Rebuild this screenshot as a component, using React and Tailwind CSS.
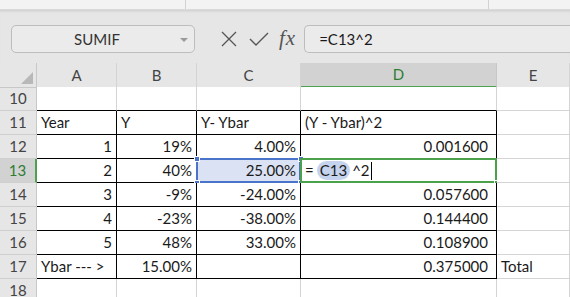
import React from "react";

const rows = [
  { n: 10, cells: ["", "", "", "", ""] },
  { n: 11, cells: [["Year", "l"], ["Y", "l"], ["Y- Ybar", "l"], ["(Y - Ybar)^2", "l"], ""] },
  { n: 12, cells: ["1", "19%", "4.00%", "0.001600", ""] },
  { n: 13, cells: ["2", "40%", "25.00%", "", ""] },
  { n: 14, cells: ["3", "-9%", "-24.00%", "0.057600", ""] },
  { n: 15, cells: ["4", "-23%", "-38.00%", "0.144400", ""] },
  { n: 16, cells: ["5", "48%", "33.00%", "0.108900", ""] },
  { n: 17, cells: [["Ybar --- >", "l"], "15.00%", "", "0.375000", ["Total", "l"]] },
  { n: 18, cells: ["", "", "", "", ""] },
];

const Handle = ({ pos }) => (
  <span className={`absolute w-[6px] h-[6px] bg-[#4a74c9] border border-white ${pos}`} />
);

const Cell = ({ value, row, col }) => {
  const text = Array.isArray(value) ? value[0] : value;
  const left = Array.isArray(value) && value[1] === "l";
  const inTable = row >= 11 && row <= 17 && col <= 3;
  const bottomBlack = row >= 10 && row <= 17 && col <= 3;
  const isC13 = row === 13 && col === 2;
  const isD13 = row === 13 && col === 3;

  return (
    <div
      className={`relative h-[24px] border-r border-b pl-[4px] leading-[23px] whitespace-nowrap ${
        col === 3 && !left ? "pr-[8px]" : "pr-[4px]"
      } ${inTable ? "border-r-black" : "border-r-[#d4d4d4]"} ${
        bottomBlack ? "border-b-black" : "border-b-[#d4d4d4]"
      } ${left ? "text-left" : "text-right"} ${isC13 ? "bg-[#dbe2f4]" : "bg-white"}`}
    >
      {text}
      {isC13 && (
        <>
          <span className="absolute -left-px -top-px right-[-1px] bottom-[-1px] border-2 border-[#4a74c9] pointer-events-none" />
          <Handle pos="-left-[3px] -top-[3px]" />
          <Handle pos="-right-[4px] -top-[3px]" />
          <Handle pos="-left-[3px] -bottom-[4px]" />
          <Handle pos="-right-[4px] -bottom-[4px]" />
        </>
      )}
      {isD13 && (
        <>
          <span className="absolute -left-px -top-px right-[-1px] bottom-[-1px] border-2 border-[#4ca24c] pointer-events-none" />
          <span className="absolute -right-[4px] -bottom-[4px] w-[6px] h-[6px] bg-[#4ca24c] border border-white" />
          <div className="relative flex items-center h-[23px] text-left">
            <span>=</span>
            <span className="ml-[3px] px-[3px] rounded-full bg-[#c5d3ef] leading-[19px]">C13</span>
            <span className="ml-[2px]">^2</span>
            <span className="ml-[1px] w-px h-[18px] bg-black" />
          </div>
        </>
      )}
    </div>
  );
};

export default function App() {
  return (
    <div className="w-[570px] h-[297px] overflow-hidden bg-white font-['Lato',sans-serif] text-[15px] text-[#1a1a1a]">
      {/* top strip */}
      <div className="h-[10px] bg-[#f3f3f3] border-b border-[#dadada] flex">
        <div className="w-[186px] border-r border-[#d2d2d2]" />
        <div className="w-[303px] border-r border-[#d2d2d2]" />
      </div>

      {/* formula bar */}
      <div className="h-[53px] bg-[#e6e6e6] flex items-start pt-[15px] shadow-[inset_0_3px_3px_-2px_rgba(0,0,0,0.12)]">
        <div className="ml-[11px] w-[184px] h-[28px] rounded-[5px] border border-[#bdbdbd] bg-[#ebebeb] relative flex items-center justify-center text-[15px] text-[#333]">
          <span className="-ml-[12px]">SUMIF</span>
          <span className="absolute right-[6px] top-[12px] w-0 h-0 border-l-[4px] border-r-[4px] border-t-[4px] border-l-transparent border-r-transparent border-t-[#9a9a9a]" />
        </div>
        <div className="flex items-center h-[28px] ml-[26px] gap-[12px]">
          <svg width="16" height="16" viewBox="0 0 16 16">
            <path d="M1 1 L15 15 M15 1 L1 15" stroke="#555" strokeWidth="1.3" fill="none" />
          </svg>
          <svg width="20" height="16" viewBox="0 0 20 16">
            <path d="M1 8 L7 14 L19 2" stroke="#555" strokeWidth="1.4" fill="none" />
          </svg>
          <span className="font-['Liberation_Serif',serif] italic text-[21px] text-[#555] -ml-[2px] tracking-[1px]">fx</span>
        </div>
        <div className="ml-[8px] flex-1 h-[28px] rounded-l-[5px] border border-r-0 border-[#bdbdbd] bg-[#ebebeb] flex items-center pl-[14px] text-[15px] text-[#1a1a1a]">
          =C13^2
        </div>
      </div>

      {/* column headers */}
      <div className="grid grid-cols-[37px_80px_80px_104px_196px_1fr] h-[24px] bg-[#e6e6e6] text-[#444]">
        <div className="relative border-r border-b border-[#c8c8c8]">
          <svg className="absolute right-[3px] bottom-[3px]" width="12" height="12" viewBox="0 0 12 12">
            <path d="M12 0 L12 12 L0 12 Z" fill="#b8b8b8" />
          </svg>
        </div>
        {["A", "B", "C", "D", "E"].map((c) => (
          <div
            key={c}
            className={`flex items-center justify-center border-r ${
              c === "D"
                ? "bg-[#d2d2d2] text-[#2e7d32] border-b-2 border-b-[#4ca24c] border-r-[#c8c8c8]"
                : "border-b border-b-[#c8c8c8] border-r-[#d4d4d4]"
            }`}
          >
            {c}
          </div>
        ))}
      </div>

      {/* sheet body */}
      <div className="grid grid-cols-[37px_80px_80px_104px_196px_1fr]">
        {rows.map((r) => (
          <React.Fragment key={r.n}>
            <div
              className={`h-[24px] flex items-center justify-center border-b border-b-[#cfcfcf] ${
                r.n === 13
                  ? "bg-[#d2d2d2] text-[#2e7d32] border-r-2 border-r-[#4ca24c]"
                  : "bg-[#e6e6e6] text-[#444] border-r border-r-[#c8c8c8]"
              }`}
            >
              {r.n}
            </div>
            {r.cells.map((v, i) => (
              <Cell key={i} value={v} row={r.n} col={i} />
            ))}
          </React.Fragment>
        ))}
      </div>
    </div>
  );
}
